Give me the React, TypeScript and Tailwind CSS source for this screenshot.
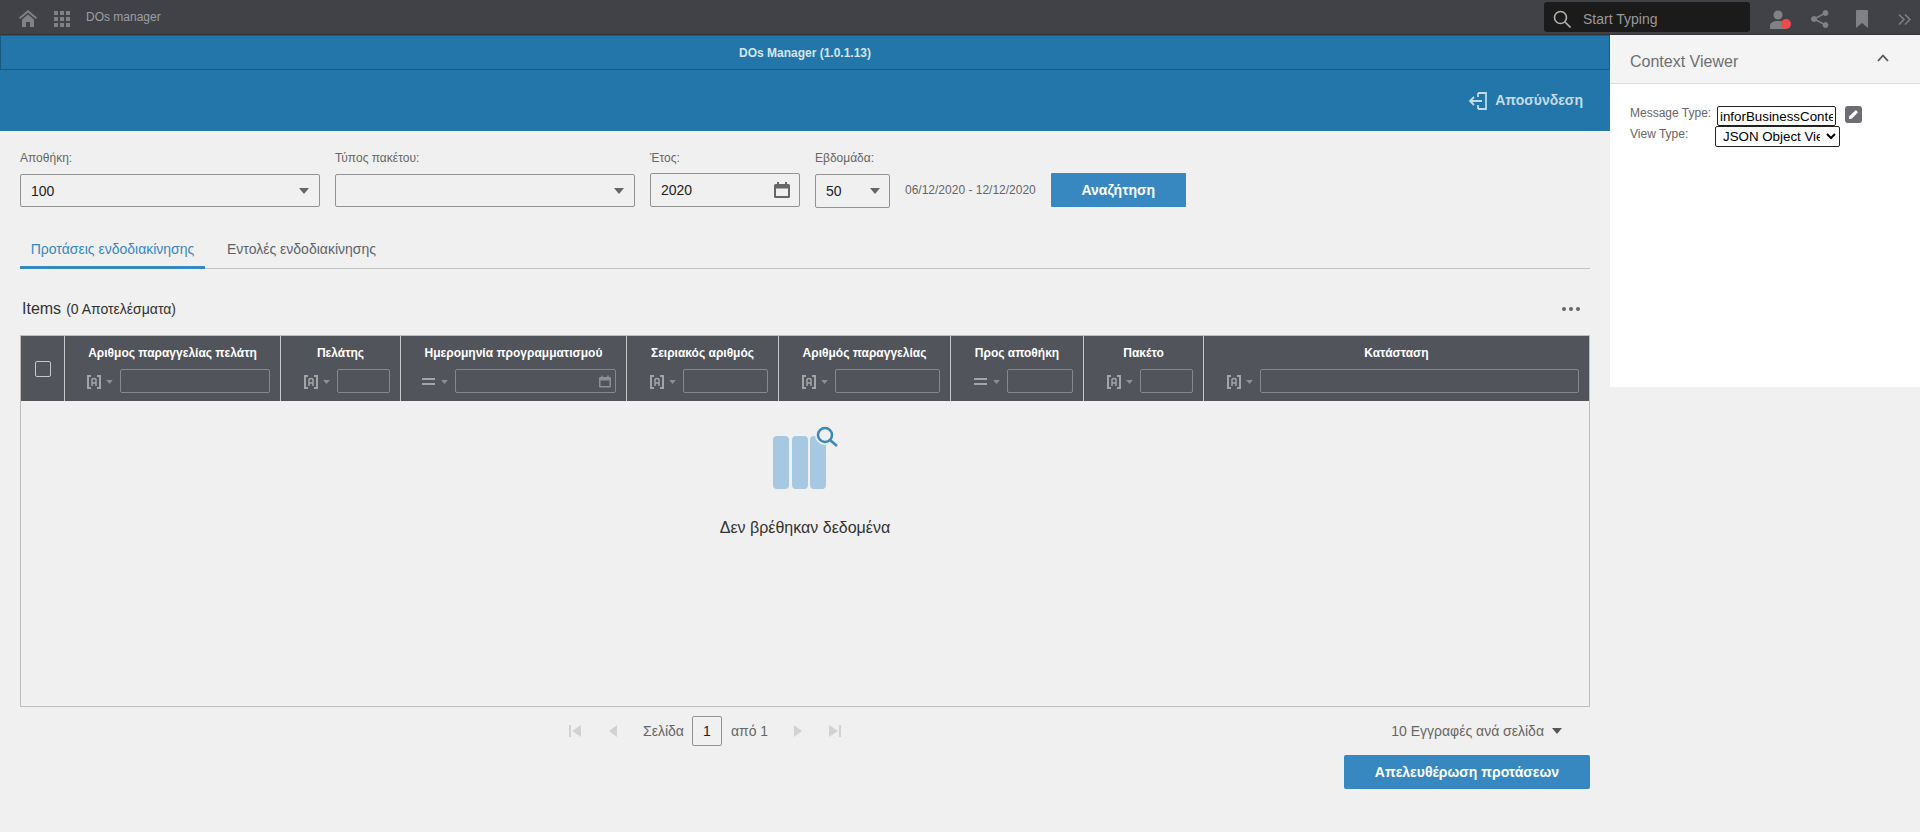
import React from "react";

const Caret = ({ className = "" }: { className?: string }) => (
  <svg viewBox="0 0 10 6" className={className} fill="currentColor"><path d="M0 0h10L5 6z" /></svg>
);

const Cal = ({ className = "" }: { className?: string }) => (
  <svg viewBox="0 0 16 16" className={className} fill="currentColor">
    <path d="M3 0h2v2h6V0h2v2h1.5A1.5 1.5 0 0 1 16 3.5v11a1.5 1.5 0 0 1-1.5 1.5h-13A1.5 1.5 0 0 1 0 14.5v-11A1.5 1.5 0 0 1 1.5 2H3zM2 6.5V14h12V6.5z" />
  </svg>
);

const BracketA = () => (
  <svg viewBox="0 0 14 14" className="w-[14px] h-[14px] mt-[1px] text-[#a2a4a8]" fill="none" stroke="currentColor" strokeWidth="2">
    <path d="M4 1H1v12h3M10 1h3v12h-3" />
    <path d="M5 11V5q0-1.500 2-1.500T9 5v6M5 8h4" strokeWidth="1.500" />
  </svg>
);

const Equal = () => (
  <svg viewBox="0 0 14 14" className="w-[14px] h-[14px] mt-[1px] text-[#a2a4a8]" fill="currentColor">
    <rect x="0" y="3" width="13" height="2" />
    <rect x="0" y="8" width="13" height="2" />
  </svg>
);

type Col = { title: string; width: string; input: string; op: "a" | "eq"; cal?: boolean };

const cols: Col[] = [
  { title: "Αριθμος παραγγελίας πελάτη", width: "w-[216px]", input: "w-[150px]", op: "a" },
  { title: "Πελάτης", width: "w-[120px]", input: "w-[53px]", op: "a" },
  { title: "Ημερομηνία προγραμματισμού", width: "w-[226px]", input: "w-[161px]", op: "eq", cal: true },
  { title: "Σειριακός αριθμός", width: "w-[152px]", input: "w-[85px]", op: "a" },
  { title: "Αριθμός παραγγελίας", width: "w-[172px]", input: "w-[105px]", op: "a" },
  { title: "Προς αποθήκη", width: "w-[133px]", input: "w-[66px]", op: "eq" },
  { title: "Πακέτο", width: "w-[120px]", input: "w-[53px]", op: "a" },
  { title: "Κατάσταση", width: "w-[386px]", input: "w-[319px]", op: "a" },
];

const Field = ({ label, children, className }: { label: string; children: React.ReactNode; className: string }) => (
  <div className={className}>
    <div className="h-[16px] leading-[16px] text-[12px] text-[#666] mb-[8px]">{label}</div>
    {children}
  </div>
);

const SelectBox = ({ value }: { value: string }) => (
  <div className="h-[33px] border border-[#929292] rounded-[2px] flex items-center pl-[10px] text-[14px] text-[#222]">
    <span className="pt-[1px]">{value}</span>
    <Caret className="w-[10px] h-[6px] ml-auto mr-[10px] text-[#666]" />
  </div>
);

export default function App() {
  return (
    <div className="w-[1920px] h-[832px] overflow-hidden flex flex-col bg-[#f0f0f0] text-[#222]" style={{ fontFamily: '"Liberation Sans", Arial, sans-serif' }}>
      {/* Top bar */}
      <header className="h-[35px] shrink-0 bg-[#414247] border-b border-b-[#333438] flex items-center">
        <svg viewBox="0 0 18 17" className="w-[18px] h-[17px] ml-[19px] mt-[3px] text-[#808187]" fill="currentColor">
          <path d="M9 0l9 7.500-1.200 1.400L9 2.500 1.200 8.900 0 7.500z" />
          <path d="M9 4.500l6 5V17h-4v-5H7v5H3V9.500z" />
        </svg>
        <div className="ml-[17px] mt-[4px] grid grid-cols-3 gap-[2px] w-[16px]">
          {[0, 1, 2, 3, 4, 5, 6, 7, 8].map((i) => (
            <span key={i} className="w-[4px] h-[4px] bg-[#808187]" />
          ))}
        </div>
        <span className="ml-[16px] text-[12px] text-[#9d9fa3]">DOs manager</span>
        <div className="ml-auto w-[206px] h-[30px] bg-[#1b1b1b] rounded-[3px] flex items-center pl-[9px] pt-[4px] text-[14px] text-[#9a9a9a]">
          <svg viewBox="0 0 18 18" className="w-[18px] h-[18px] text-[#b0b0b0]" fill="none" stroke="currentColor" strokeWidth="1.600">
            <circle cx="7.500" cy="7.500" r="6" />
            <path d="M12 12l5.500 5.500" />
          </svg>
          <span className="ml-[12px]">Start Typing</span>
        </div>
        <div className="relative ml-[20px] mt-[5px] w-[20px] h-[20px]">
          <svg viewBox="0 0 18 20" className="w-[18px] h-[20px] text-[#808187]" fill="currentColor">
            <circle cx="8" cy="5" r="4.500" />
            <path d="M0 19v-3c0-3 3-5 8-5s8 2 8 5v3z" />
          </svg>
          <span className="absolute left-[11px] top-[9px] w-[10px] h-[10px] rounded-full bg-[#ee4a4e]" />
        </div>
        <svg viewBox="0 0 18 18" className="ml-[21px] mt-[4px] w-[18px] h-[18px] text-[#808187]" fill="currentColor" stroke="currentColor">
          <circle cx="14.500" cy="3" r="2.500" />
          <circle cx="3" cy="9" r="2.500" />
          <circle cx="14.500" cy="15" r="2.500" />
          <path d="M14.500 3L3 9l11.500 6" fill="none" strokeWidth="1.500" />
        </svg>
        <svg viewBox="0 0 12 18" className="ml-[27px] mt-[4px] w-[12px] h-[18px] text-[#808187]" fill="currentColor">
          <path d="M0 1a1 1 0 0 1 1-1h10a1 1 0 0 1 1 1v17l-6-5-6 5z" />
        </svg>
        <svg viewBox="0 0 13 11" className="ml-[30px] mr-[9px] mt-[4px] w-[13px] h-[11px] text-[#808187]" fill="none" stroke="currentColor" strokeWidth="1.500">
          <path d="M1 .5l5 5-5 5M7 .5l5 5-5 5" />
        </svg>
      </header>

      <div className="flex flex-1 min-h-0">
        {/* Main */}
        <main className="w-[1610px] shrink-0 flex flex-col">
          <div className="bg-[#2376a9] shrink-0">
            <div className="h-[35px] border border-[#1b5a80] flex items-center justify-center text-[12px] font-bold text-[#d5e5f0]">
              DOs Manager (1.0.1.13)
            </div>
            <div className="h-[61px] flex items-center justify-end pr-[27px] text-[#c3dae9]">
              <svg viewBox="0 0 18 18" className="w-[18px] h-[18px]" fill="none" stroke="currentColor" strokeWidth="1.800">
                <path d="M9 1h8v16H9M9 1v4M9 17v-4M13 9H1M5 5L1 9l4 4" />
              </svg>
              <span className="ml-[8px] text-[14px] font-bold">Αποσύνδεση</span>
            </div>
          </div>

          <div className="flex-1 px-[20px] flex flex-col">
            {/* Filters */}
            <div className="flex gap-[15px] pt-[19px]">
              <Field label="Αποθήκη:" className="w-[300px]">
                <SelectBox value="100" />
              </Field>
              <Field label="Τύπος πακέτου:" className="w-[300px]">
                <SelectBox value="" />
              </Field>
              <Field label="Έτος:" className="w-[150px]">
                <div className="h-[34px] -mt-px border border-[#929292] rounded-[2px] flex items-center pl-[10px] pr-[9px] text-[14px] text-[#222]">
                  <span>2020</span>
                  <Cal className="ml-auto w-[16px] h-[16px] text-[#666]" />
                </div>
              </Field>
              <Field label="Εβδομάδα:" className="w-[75px]">
                <div className="h-[34px] border border-[#929292] rounded-[2px] flex items-center pl-[10px] text-[14px] text-[#222]">
                  <span>50</span>
                  <Caret className="w-[10px] h-[6px] ml-auto mr-[9px] text-[#666]" />
                </div>
              </Field>
              <div className="pt-[24px] flex">
                <span className="h-[32px] leading-[32px] text-[12px] text-[#666]">06/12/2020 - 12/12/2020</span>
                <button className="ml-[15px] -mt-px w-[135px] h-[34px] bg-[#3788c0] rounded-[1px] text-white font-bold text-[14px]">Αναζήτηση</button>
              </div>
            </div>

            {/* Tabs */}
            <div className="mt-[24px] h-[37px] border-b border-b-[#c4c4c4] flex text-[14px]">
              <div className="w-[185px] h-[37px] flex items-center justify-center pt-[1px] border-b-[3px] border-b-[#3788c0] text-[#3788c0]">
                Προτάσεις ενδοδιακίνησης
              </div>
              <div className="ml-[22px] h-[36px] pb-[1px] flex items-center text-[#5f6368]">Εντολές ενδοδιακίνησης</div>
            </div>

            {/* Items */}
            <div className="mt-[25px] h-[30px] flex items-center pl-[2px] pr-[10px] mb-[11px]">
              <span className="text-[16px] text-[#333]">Items</span>
              <span className="ml-[5px] text-[14px] text-[#333]">(0 Αποτελέσματα)</span>
              <div className="ml-auto flex gap-[3px]">
                <span className="w-[4px] h-[4px] rounded-full bg-[#666]" />
                <span className="w-[4px] h-[4px] rounded-full bg-[#666]" />
                <span className="w-[4px] h-[4px] rounded-full bg-[#666]" />
              </div>
            </div>

            {/* Table */}
            <div className="w-[1570px] h-[372px] border border-[#bdbdbd] flex flex-col">
              <div className="flex h-[65px] bg-[#51545b] shrink-0">
                <div className="w-[43px] flex items-center justify-center">
                  <span className="w-[16px] h-[16px] border border-[#c8c8c8] rounded-[2px]" />
                </div>
                {cols.map((c) => (
                  <div key={c.title} className={`${c.width} border-l border-l-[#c8c8c8] flex flex-col items-center pt-[9px]`}>
                    <div className="h-[16px] leading-[16px] text-[12px] font-bold text-white whitespace-nowrap">{c.title}</div>
                    <div className="mt-[8px] w-full flex items-center justify-end pr-[10px]">
                      {c.op === "a" ? <BracketA /> : <Equal />}
                      <Caret className="w-[7px] h-[4px] ml-[5px] mr-[7px] mt-[1px] text-[#8d8f94]" />
                      <div className={`${c.input} h-[24px] border border-[#85878c] rounded-[2px] flex items-center justify-end pr-[4px]`}>
                        {c.cal && <Cal className="w-[12px] h-[13px] text-[#8d8f94]" />}
                      </div>
                    </div>
                  </div>
                ))}
              </div>
              <div className="flex-1 flex flex-col items-center pt-[23px]">
                <svg viewBox="770 425 70 67" className="w-[70px] h-[67px]">
                  <rect x="773" y="437" width="16" height="53" rx="4" fill="#a6c8e0" />
                  <rect x="792" y="437" width="16" height="53" rx="4" fill="#a6c8e0" />
                  <rect x="810" y="437" width="16" height="53" rx="4" fill="#a6c8e0" />
                  <circle cx="825" cy="436" r="10" fill="#f0f0f0" />
                  <circle cx="825" cy="436" r="7" fill="none" stroke="#3788c0" strokeWidth="2.500" />
                  <path d="M830 441l7 6" fill="none" stroke="#3788c0" strokeWidth="2.500" />
                </svg>
                <div className="mt-[25px] text-[16px] text-[#333]">Δεν βρέθηκαν δεδομένα</div>
              </div>
            </div>

            {/* Pager */}
            <div className="mt-[9px] h-[30px] flex items-center text-[14px] text-[#666]">
              <svg viewBox="0 0 12 12" className="ml-[549px] w-[12px] h-[12px] text-[#d2d2d2]" fill="currentColor"><path d="M0 0h2v12H0zM12 0v12L3 6z" /></svg>
              <svg viewBox="0 0 8 12" className="ml-[28px] w-[8px] h-[12px] text-[#d2d2d2]" fill="currentColor"><path d="M8 0v12L0 6z" /></svg>
              <span className="ml-[26px]">Σελίδα</span>
              <span className="ml-[8px] w-[30px] h-[30px] border border-[#929292] rounded-[2px] flex items-center justify-center text-[#222]">1</span>
              <span className="ml-[9px]">από 1</span>
              <svg viewBox="0 0 8 12" className="ml-[26px] w-[8px] h-[12px] text-[#d2d2d2]" fill="currentColor"><path d="M0 0v12l8-6z" /></svg>
              <svg viewBox="0 0 12 12" className="ml-[27px] w-[12px] h-[12px] text-[#d2d2d2]" fill="currentColor"><path d="M0 0v12l9-6zM10 0h2v12h-2z" /></svg>
              <span className="ml-auto">10 Εγγραφές ανά σελίδα</span>
              <Caret className="ml-[8px] mr-[28px] w-[10px] h-[6px] text-[#555]" />
            </div>
            <div className="mt-[9px] flex justify-end">
              <button className="w-[246px] h-[34px] bg-[#3788c0] rounded-[2px] text-white font-bold text-[14px]">Απελευθέρωση προτάσεων</button>
            </div>
          </div>
        </main>

        {/* Context viewer */}
        <aside className="w-[310px] h-[352px] bg-white shrink-0 flex flex-col">
          <div className="h-[49px] bg-[#f4f4f4] border-b border-b-[#dcdcdc] flex items-center pl-[20px] pr-[31px] pt-[6px]">
            <span className="text-[16px] text-[#6c6f74]">Context Viewer</span>
            <svg viewBox="0 0 12 8" className="ml-auto w-[12px] h-[8px] -mt-[9px] text-[#555]" fill="none" stroke="currentColor" strokeWidth="1.800"><path d="M1 7l5-5.500L11 7" /></svg>
          </div>
          <div className="pl-[20px] pt-[22px]">
            <div className="flex items-start h-[20px]">
              <span className="w-[85px] -mt-[1px] text-[12px] text-[#666] leading-[16px] whitespace-nowrap">Message Type:</span>
              <input readOnly value="inforBusinessContext" className="ml-[2px] w-[119px] h-[20px] border border-[#222] rounded-[2px] px-[2px] text-[13.333px] text-black outline-none" />
              <span className="ml-[9px] w-[17px] h-[17px] rounded-[3px] bg-[#6e6d74] flex items-center justify-center">
                <svg viewBox="0 0 12 12" className="w-[11px] h-[11px] text-white" fill="currentColor"><path d="M8.500 1l2.500 2.500L4 10.500 1 11l.500-3z" /></svg>
              </span>
            </div>
            <div className="flex items-start h-[21px]">
              <span className="w-[85px] text-[12px] text-[#666] leading-[16px] whitespace-nowrap">View Type:</span>
              <select defaultValue="json" className="w-[125px] h-[21px] border border-[#222] rounded-[2px] pl-[3px] pr-[3px] text-[13.333px] text-black bg-white appearance-auto">
                <option value="json">JSON Object Viewer</option>
              </select>
            </div>
          </div>
        </aside>
      </div>
    </div>
  );
}
